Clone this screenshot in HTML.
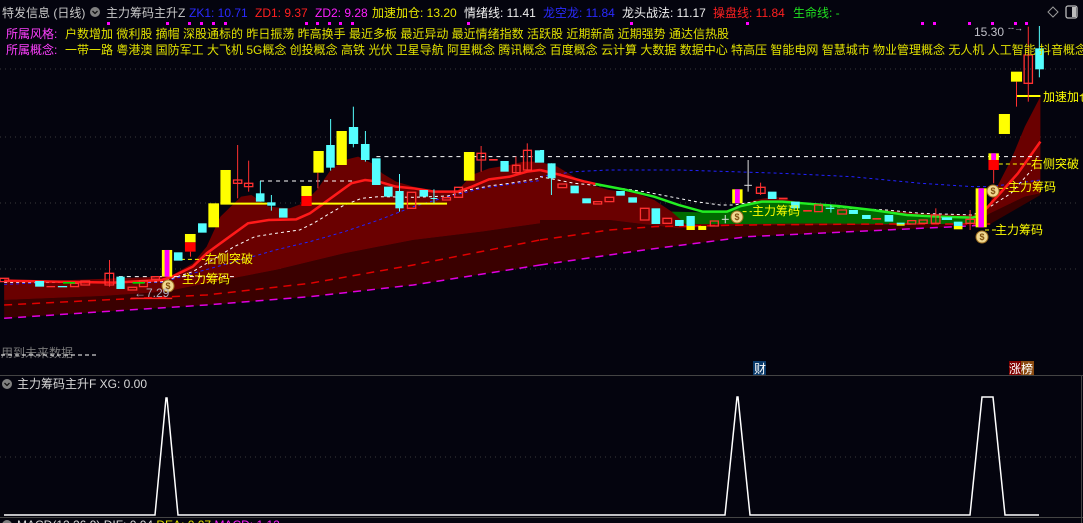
<!DOCTYPE html>
<html><head><meta charset="utf-8"><style>
html,body{margin:0;padding:0;background:#04040e;width:1083px;height:523px;overflow:hidden}
svg{display:block}
text{font-family:"Liberation Sans","Noto Sans CJK SC",sans-serif}
</style></head><body>
<svg width="1083" height="523" viewBox="0 0 1083 523" xmlns="http://www.w3.org/2000/svg">
<rect width="1083" height="523" fill="#04040e"/>
<!-- grid -->
<g stroke="#3a3a3a" stroke-dasharray="1 4" stroke-width="1">
<line x1="0" y1="69" x2="1080" y2="69"/><line x1="0" y1="137" x2="1080" y2="137"/>
<line x1="0" y1="203" x2="1080" y2="203"/><line x1="0" y1="269" x2="1080" y2="269"/>
<line x1="0" y1="457" x2="1080" y2="457"/>
</g>

<!-- LEFT chart group (zoom coords) -->
<g transform="translate(0,90) scale(0.3444,0.3333)">
<polygon fill="#3a0000" points="12,630 300,618 480,605 600,580 800,540 1000,490 1200,450 1400,425 1568,400 1568,525 1200,585 900,620 600,645 300,665 12,685"/>
<polygon fill="#6a0000" points="12,575 160,572 470,560 500,555 560,520 600,470 640,380 700,320 730,315 780,350 840,355 880,340 920,300 960,240 1000,210 1040,200 1080,220 1110,250 1150,275 1200,290 1280,305 1330,300 1370,255 1420,235 1480,225 1520,215 1568,215 1568,400 1400,425 1200,450 1000,490 800,540 600,580 480,605 300,618 12,630"/>
<polyline fill="none" stroke="#e00000" stroke-width="1.5" stroke-dasharray="8 6" vector-effect="non-scaling-stroke" points="12,645 300,630 600,615 900,580 1200,525 1568,450"/>
<polyline fill="none" stroke="#e000e0" stroke-width="1.5" stroke-dasharray="8 6" vector-effect="non-scaling-stroke" points="12,685 300,665 600,645 900,620 1200,585 1568,525"/>
<polyline fill="none" stroke="#2222ff" stroke-width="1" stroke-dasharray="3 3" vector-effect="non-scaling-stroke" points="12,583 200,575 400,578 470,577 560,550 700,510 800,480 900,455 1000,425 1100,390 1200,350 1300,320 1400,295 1500,280 1568,272"/>
<polyline fill="none" stroke="#ffffff" stroke-width="1" stroke-dasharray="3 3" vector-effect="non-scaling-stroke" points="12,577 300,578 470,575 560,545 600,520 680,470 740,440 800,430 870,420 910,400 950,375 1000,345 1050,325 1100,320 1200,322 1300,318 1360,300 1420,288 1480,280 1568,265"/>
<polyline fill="none" stroke="#ff1a1a" stroke-width="2.5" vector-effect="non-scaling-stroke" points="12,572 160,575 330,578 470,570 500,560 560,530 600,490 640,460 680,430 720,400 780,390 860,388 900,370 940,340 980,310 1020,280 1060,270 1100,275 1150,290 1200,295 1260,305 1330,305 1370,290 1420,268 1480,260 1530,245 1568,240"/>
<g stroke="#ffffff" stroke-dasharray="4 4" vector-effect="non-scaling-stroke" stroke-width="1">
<line x1="755" y1="273" x2="1030" y2="273" vector-effect="non-scaling-stroke"/>
<line x1="1093" y1="200" x2="1568" y2="200" vector-effect="non-scaling-stroke"/>
<line x1="345" y1="560" x2="470" y2="560" vector-effect="non-scaling-stroke"/>
<line x1="505" y1="560" x2="690" y2="560" vector-effect="non-scaling-stroke"/>
</g>
<g stroke="#ffff00" stroke-width="2" vector-effect="non-scaling-stroke">
<line x1="640" y1="341" x2="790" y2="341" vector-effect="non-scaling-stroke"/>
<line x1="890" y1="341" x2="1298" y2="341" vector-effect="non-scaling-stroke"/>
</g>
<line x1="505" y1="508" x2="595" y2="508" stroke="#ffff00" stroke-dasharray="4 3" vector-effect="non-scaling-stroke"/>
<line x1="380" y1="625" x2="500" y2="625" stroke="#ff2020" stroke-width="1.5" vector-effect="non-scaling-stroke"/>
<!-- wicks -->
<g stroke-width="1" vector-effect="non-scaling-stroke">
<line x1="690" y1="165" x2="690" y2="325" stroke="#ff3030" vector-effect="non-scaling-stroke"/>
<line x1="722" y1="212" x2="722" y2="305" stroke="#ff3030" vector-effect="non-scaling-stroke"/>
<line x1="756" y1="273" x2="756" y2="335" stroke="#55ffff" vector-effect="non-scaling-stroke"/>
<line x1="788" y1="315" x2="788" y2="362" stroke="#55ffff" vector-effect="non-scaling-stroke"/>
<line x1="923" y1="248" x2="923" y2="295" stroke="#ff3030" vector-effect="non-scaling-stroke"/>
<line x1="960" y1="87" x2="960" y2="242" stroke="#55ffff" vector-effect="non-scaling-stroke"/>
<line x1="1026" y1="50" x2="1026" y2="172" stroke="#55ffff" vector-effect="non-scaling-stroke"/>
<line x1="1061" y1="123" x2="1061" y2="215" stroke="#55ffff" vector-effect="non-scaling-stroke"/>
<line x1="1160" y1="252" x2="1160" y2="365" stroke="#55ffff" vector-effect="non-scaling-stroke"/>
<line x1="1397" y1="168" x2="1397" y2="245" stroke="#ff3030" vector-effect="non-scaling-stroke"/>
<line x1="1531" y1="160" x2="1531" y2="240" stroke="#ff3030" vector-effect="non-scaling-stroke"/>
<line x1="1498" y1="200" x2="1498" y2="250" stroke="#ff3030" vector-effect="non-scaling-stroke"/>
<line x1="318" y1="510" x2="318" y2="590" stroke="#ff3030" vector-effect="non-scaling-stroke"/>
<line x1="1260" y1="298" x2="1260" y2="340" stroke="#55ffff" vector-effect="non-scaling-stroke"/>
<line x1="553" y1="485" x2="553" y2="500" stroke="#ff3030" vector-effect="non-scaling-stroke"/>
</g>
<!-- solid bodies -->
<rect x="640" y="240" width="30" height="100" fill="#ffff00"/>
<rect x="605" y="340" width="31" height="72" fill="#ffff00"/>
<rect x="537" y="432" width="31" height="25" fill="#ffff00"/><rect x="537" y="457" width="31" height="28" fill="#ff0000"/>
<rect x="470" y="480" width="30" height="80" fill="#ffff00"/><rect x="478" y="480" width="14" height="80" fill="#ff00ff"/>
<rect x="875" y="288" width="30" height="30" fill="#ffff00"/><rect x="875" y="318" width="30" height="30" fill="#ff0000"/>
<rect x="910" y="183" width="30" height="65" fill="#ffff00"/>
<rect x="977" y="123" width="30" height="102" fill="#ffff00"/>
<rect x="1347" y="186" width="31" height="86" fill="#ffff00"/>
<g fill="#55ffff">
<rect x="505" y="487" width="25" height="25"/><rect x="575" y="400" width="25" height="28"/>
<rect x="743" y="310" width="25" height="25"/><rect x="776" y="337" width="24" height="10"/>
<rect x="810" y="355" width="25" height="28"/><rect x="947" y="165" width="25" height="68"/>
<rect x="1013" y="111" width="27" height="51"/><rect x="1048" y="162" width="25" height="48"/>
<rect x="1080" y="205" width="25" height="80"/><rect x="1115" y="290" width="25" height="30"/>
<rect x="1148" y="303" width="24" height="52"/><rect x="1218" y="300" width="25" height="20"/>
<rect x="1453" y="213" width="24" height="32"/><rect x="1553" y="181" width="15" height="37"/>
<rect x="338" y="560" width="24" height="37"/><rect x="102" y="573" width="26" height="17"/>
<rect x="168" y="588" width="27" height="4"/>
</g>
<g fill="none" stroke="#ff3030" stroke-width="1.3" vector-effect="non-scaling-stroke">
<rect x="678" y="270" width="24" height="10" vector-effect="non-scaling-stroke"/>
<rect x="710" y="280" width="24" height="10" vector-effect="non-scaling-stroke"/>
<rect x="1183" y="307" width="24" height="48" vector-effect="non-scaling-stroke"/>
<rect x="1285" y="323" width="23" height="7" vector-effect="non-scaling-stroke"/>
<rect x="1320" y="292" width="23" height="30" vector-effect="non-scaling-stroke"/>
<rect x="1385" y="190" width="25" height="20" vector-effect="non-scaling-stroke"/>
<rect x="1488" y="226" width="22" height="22" vector-effect="non-scaling-stroke"/>
<rect x="1520" y="181" width="23" height="59" vector-effect="non-scaling-stroke"/>
<rect x="305" y="550" width="25" height="35" vector-effect="non-scaling-stroke"/>
<rect x="0" y="565" width="25" height="10" vector-effect="non-scaling-stroke"/>
<rect x="205" y="580" width="23" height="10" vector-effect="non-scaling-stroke"/>
<rect x="235" y="573" width="25" height="12" vector-effect="non-scaling-stroke"/>
<rect x="372" y="592" width="25" height="8" vector-effect="non-scaling-stroke"/>
<rect x="405" y="572" width="23" height="18" vector-effect="non-scaling-stroke"/>
<rect x="440" y="560" width="23" height="8" vector-effect="non-scaling-stroke"/>
</g>
<rect x="1420" y="207" width="25" height="5" fill="#ff3030"/>
<rect x="135" y="588" width="25" height="4" fill="#ff3030"/>
<rect x="183" y="576" width="35" height="5" fill="#00e000"/><rect x="385" y="576" width="35" height="5" fill="#00e000"/>
<rect x="1250" y="324" width="20" height="3" fill="#55ffff"/>
</g>

<!-- RIGHT chart group -->
<g transform="translate(540,20) scale(0.3463,0.3333)">
<polygon fill="#3a0000" points="0,600 100,600 200,600 400,625 600,615 800,615 1000,615 1200,612 1270,600 1300,580 1400,530 1445,520 1445,525 1300,612 1200,620 900,635 600,650 300,690 0,735"/>
<polygon fill="#6a0000" points="0,426 50,440 130,490 200,510 280,520 330,540 380,575 420,585 500,580 560,565 620,540 680,530 740,545 800,555 900,565 1000,570 1100,580 1250,585 1290,570 1320,500 1360,420 1400,320 1445,230 1445,520 1400,530 1300,580 1270,600 1200,612 1000,615 800,615 600,615 400,625 200,600 100,600 0,600"/>
<polygon fill="#006a00" points="380,575 470,577 540,577 580,560 640,548 700,548 760,552 860,560 960,572 1060,587 1150,592 1250,595 1260,612 1150,612 1000,612 800,610 600,612 420,612"/>
<polyline fill="none" stroke="#e00000" stroke-width="1.5" stroke-dasharray="8 6" vector-effect="non-scaling-stroke" points="0,660 200,630 330,620 600,615 1000,612 1300,612"/>
<polyline fill="none" stroke="#e000e0" stroke-width="1.5" stroke-dasharray="8 6" vector-effect="non-scaling-stroke" points="0,735 300,690 600,650 900,635 1200,620 1290,615"/>
<polyline fill="none" stroke="#2222ff" stroke-width="1" stroke-dasharray="3 3" vector-effect="non-scaling-stroke" points="0,470 100,455 200,450 400,450 550,455 700,460 900,470 1100,490 1250,500 1300,500 1445,480"/>
<polyline fill="none" stroke="#ffffff" stroke-width="1" stroke-dasharray="3 3" vector-effect="non-scaling-stroke" points="0,470 100,490 200,500 300,515 350,525 450,545 520,555 560,555 620,545 700,545 800,555 900,565 1000,570 1100,580 1250,585 1300,560 1360,520 1420,450"/>
<polyline fill="none" stroke="#ff1a1a" stroke-width="2.5" vector-effect="non-scaling-stroke" points="0,450 60,465 130,485 160,492"/>
<polyline fill="none" stroke="#22ee22" stroke-width="2.5" vector-effect="non-scaling-stroke" points="160,492 250,510 330,530 400,555 470,575 540,575 580,558 640,545 700,545 760,550 860,558 960,570 1060,585 1150,590 1250,593 1270,585"/>
<polyline fill="none" stroke="#ff1a1a" stroke-width="2.5" vector-effect="non-scaling-stroke" points="1270,585 1285,570 1320,530 1380,460 1445,365"/>
<line x1="0" y1="410" x2="1440" y2="410" stroke="#fff" stroke-dasharray="4 4" vector-effect="non-scaling-stroke"/>
<line x1="1375" y1="228" x2="1445" y2="228" stroke="#ffff00" stroke-width="2" vector-effect="non-scaling-stroke"/>
<line x1="1325" y1="432" x2="1418" y2="432" stroke="#ffff00" stroke-dasharray="4 3" vector-effect="non-scaling-stroke"/>
<line x1="1285" y1="630" x2="1318" y2="630" stroke="#ffff00" stroke-dasharray="4 3" vector-effect="non-scaling-stroke"/>
<line x1="585" y1="575" x2="612" y2="575" stroke="#ffff00" stroke-dasharray="4 3" vector-effect="non-scaling-stroke"/>
<line x1="1325" y1="505" x2="1352" y2="505" stroke="#ffff00" stroke-dasharray="4 3" vector-effect="non-scaling-stroke"/>
<g stroke-width="1">
<line x1="33" y1="430" x2="33" y2="525" stroke="#55ffff" vector-effect="non-scaling-stroke"/>
<line x1="601" y1="420" x2="601" y2="515" stroke="#dddddd" vector-effect="non-scaling-stroke"/>
<line x1="1410" y1="20" x2="1410" y2="245" stroke="#ff3030" vector-effect="non-scaling-stroke"/>
<line x1="1442" y1="18" x2="1442" y2="172" stroke="#55ffff" vector-effect="non-scaling-stroke"/>
<line x1="1376" y1="185" x2="1376" y2="260" stroke="#ff3030" vector-effect="non-scaling-stroke"/>
<line x1="1310" y1="450" x2="1310" y2="490" stroke="#ff3030" vector-effect="non-scaling-stroke"/>
<line x1="1143" y1="565" x2="1143" y2="610" stroke="#ff3030" vector-effect="non-scaling-stroke"/>
<line x1="1242" y1="570" x2="1242" y2="630" stroke="#ff3030" vector-effect="non-scaling-stroke"/>
<line x1="637" y1="488" x2="637" y2="525" stroke="#ff3030" vector-effect="non-scaling-stroke"/>
<line x1="535" y1="585" x2="535" y2="610" stroke="#dddddd" vector-effect="non-scaling-stroke"/>
<line x1="840" y1="555" x2="840" y2="578" stroke="#55ffff" vector-effect="non-scaling-stroke"/>
</g>
<line x1="590" y1="496" x2="612" y2="496" stroke="#ddd" vector-effect="non-scaling-stroke"/>
<line x1="525" y1="598" x2="545" y2="598" stroke="#ddd" vector-effect="non-scaling-stroke"/>
<g fill="#55ffff">
<rect x="0" y="390" width="12" height="38"/><rect x="22" y="430" width="23" height="45"/>
<rect x="88" y="497" width="24" height="23"/><rect x="122" y="535" width="25" height="15"/>
<rect x="220" y="513" width="25" height="14"/><rect x="255" y="532" width="25" height="16"/>
<rect x="322" y="565" width="25" height="47"/><rect x="390" y="600" width="25" height="18"/>
<rect x="423" y="588" width="24" height="30"/><rect x="658" y="515" width="25" height="22"/>
<rect x="725" y="545" width="25" height="20"/><rect x="892" y="570" width="26" height="12"/>
<rect x="930" y="585" width="25" height="12"/><rect x="995" y="585" width="25" height="20"/>
<rect x="1030" y="608" width="23" height="5"/><rect x="1160" y="592" width="30" height="8"/>
<rect x="1195" y="605" width="25" height="13"/><rect x="1430" y="85" width="25" height="63"/>
<rect x="825" y="563" width="25" height="4"/>
</g>
<g fill="#ffff00">
<rect x="423" y="618" width="24" height="12"/><rect x="457" y="618" width="23" height="12"/>
<rect x="1195" y="618" width="25" height="10"/><rect x="1030" y="613" width="23" height="4"/>
<rect x="1360" y="155" width="32" height="30"/><rect x="1325" y="282" width="32" height="60"/>
<rect x="555" y="508" width="30" height="42"/><rect x="1258" y="505" width="32" height="117"/>
<rect x="1295" y="400" width="30" height="20"/>
</g>
<rect x="563" y="508" width="14" height="42" fill="#ff00ff"/>
<rect x="1266" y="505" width="16" height="117" fill="#ff00ff"/>
<rect x="1303" y="400" width="14" height="20" fill="#ff00ff"/>
<rect x="1295" y="420" width="30" height="30" fill="#ff0000"/>
<g fill="#ff3030">
<rect x="690" y="533" width="25" height="5"/><rect x="760" y="570" width="25" height="5"/>
<rect x="960" y="594" width="25" height="5"/>
</g>
<g fill="none" stroke="#ff3030" stroke-width="1.3">
<rect x="52" y="492" width="25" height="11" vector-effect="non-scaling-stroke"/>
<rect x="155" y="545" width="23" height="7" vector-effect="non-scaling-stroke"/>
<rect x="188" y="532" width="25" height="13" vector-effect="non-scaling-stroke"/>
<rect x="290" y="565" width="25" height="35" vector-effect="non-scaling-stroke"/>
<rect x="355" y="595" width="25" height="15" vector-effect="non-scaling-stroke"/>
<rect x="492" y="603" width="23" height="15" vector-effect="non-scaling-stroke"/>
<rect x="625" y="502" width="25" height="18" vector-effect="non-scaling-stroke"/>
<rect x="793" y="555" width="22" height="20" vector-effect="non-scaling-stroke"/>
<rect x="860" y="570" width="25" height="12" vector-effect="non-scaling-stroke"/>
<rect x="1062" y="602" width="23" height="10" vector-effect="non-scaling-stroke"/>
<rect x="1095" y="600" width="23" height="10" vector-effect="non-scaling-stroke"/>
<rect x="1130" y="585" width="25" height="25" vector-effect="non-scaling-stroke"/>
<rect x="1230" y="598" width="25" height="12" vector-effect="non-scaling-stroke"/>
<rect x="1398" y="105" width="24" height="85" vector-effect="non-scaling-stroke"/>
</g>
</g>

<!-- money bags -->
<g font-size="9" font-weight="bold" text-anchor="middle">
<circle cx="168" cy="286" r="6" fill="#f0d890" stroke="#a07020"/><text x="168" y="289" fill="#805010">$</text>
<circle cx="737" cy="217" r="6" fill="#f0d890" stroke="#a07020"/><text x="737" y="220" fill="#805010">$</text>
<circle cx="993" cy="191" r="6" fill="#f0d890" stroke="#a07020"/><text x="993" y="194" fill="#805010">$</text>
<circle cx="982" cy="237" r="6" fill="#f0d890" stroke="#a07020"/><text x="982" y="240" fill="#805010">$</text>
</g>
<g fill="#ffff00" font-size="12">
<text x="205" y="263">右侧突破</text>
<text x="182" y="283">主力筹码</text>
<text x="752" y="215">主力筹码</text>
<text x="1008" y="191">主力筹码</text>
<text x="1031" y="168">右侧突破</text>
<text x="995" y="234">主力筹码</text>
<text x="1043" y="101">加速加仓</text>
</g>
<text x="134" y="297" fill="#b0b0c0" font-size="12">←7.29</text>
<text x="974" y="36" fill="#c0c0c8" font-size="12">15.30</text>
<text x="1008" y="31" fill="#c0c0c8" font-size="9">--→</text>

<!-- pink dots -->
<g fill="#ff00ff">
<rect x="107" y="22" width="3" height="3"/><rect x="166" y="22" width="3" height="3"/><rect x="188" y="22" width="3" height="3"/><rect x="200" y="22" width="3" height="3"/><rect x="212" y="22" width="3" height="3"/><rect x="224" y="22" width="3" height="3"/><rect x="305" y="22" width="3" height="3"/><rect x="316" y="22" width="3" height="3"/><rect x="328" y="22" width="3" height="3"/><rect x="339" y="22" width="3" height="3"/><rect x="351" y="22" width="3" height="3"/><rect x="467" y="22" width="3" height="3"/><rect x="630" y="22" width="3" height="3"/><rect x="746" y="22" width="3" height="3"/><rect x="921" y="22" width="3" height="3"/><rect x="933" y="22" width="3" height="3"/><rect x="968" y="22" width="3" height="3"/><rect x="991" y="22" width="3" height="3"/><rect x="1014" y="22" width="3" height="3"/><rect x="1025" y="22" width="3" height="3"/>
</g>

<!-- header -->
<g font-size="12">
<text x="2" y="17" fill="#c8c8c8">特发信息 (日线)</text>
<circle cx="95" cy="12" r="5" fill="#808080"/><path d="M92.5 11 L95 13.5 L97.5 11" stroke="#111" fill="none" stroke-width="1.3"/>
<text x="106" y="17" fill="#c8c8c8">主力筹码主升Z</text>
<text x="189" y="17" fill="#2a2aff">ZK1: 10.71</text>
<text x="255" y="17" fill="#ff2020">ZD1: 9.37</text>
<text x="315" y="17" fill="#ff20ff">ZD2: 9.28</text>
<text x="372" y="17" fill="#e8e800">加速加仓: 13.20</text>
<text x="464" y="17" fill="#f0f0f0">情绪线: 11.41</text>
<text x="543" y="17" fill="#2a2aff">龙空龙: 11.84</text>
<text x="622" y="17" fill="#f0f0f0">龙头战法: 11.17</text>
<text x="713" y="17" fill="#ff2020">操盘线: 11.84</text>
<text x="793" y="17" fill="#20e020">生命线: -</text>
<text x="6" y="38" fill="#ff40ff">所属风格:</text>
<text x="65" y="38" fill="#e0e000">户数增加 微利股 摘帽 深股通标的 昨日振荡 昨高换手 最近多板 最近异动 最近情绪指数 活跃股 近期新高 近期强势 通达信热股</text>
<text x="6" y="54" fill="#ff40ff">所属概念:</text>
<text x="65" y="54" fill="#e0e000">一带一路 粤港澳 国防军工 大飞机 5G概念 创投概念 高铁 光伏 卫星导航 阿里概念 腾讯概念 百度概念 云计算 大数据 数据中心 特高压 智能电网 智慧城市 物业管理概念 无人机 人工智能 抖音概念</text>
</g>
<path d="M1053 7 L1058 12 L1053 17 L1048 12 Z" fill="none" stroke="#999"/>
<rect x="1066" y="6" width="11" height="12" rx="2" fill="none" stroke="#bbb" stroke-width="1.3"/><rect x="1072" y="7" width="4" height="10" fill="#bbb"/>

<!-- footer of main -->
<text x="1" y="357" fill="#7a7a7a" font-size="12">用到未来数据</text>
<line x1="1" y1="355" x2="97" y2="355" stroke="#fff" stroke-dasharray="4 3"/>
<rect x="753" y="361" width="13" height="14" fill="#0a3a6a"/><text x="754" y="373" fill="#fff" font-size="12">财</text>
<rect x="1009" y="361" width="12" height="14" fill="#800000"/><rect x="1021" y="361" width="13" height="14" fill="#8a4a10"/><text x="1009" y="373" fill="#fff" font-size="12">涨榜</text>
<line x1="0" y1="375.5" x2="1083" y2="375.5" stroke="#444"/>

<!-- bottom panel -->
<circle cx="7" cy="384" r="5" fill="#808080"/><path d="M4.5 383 L7 385.5 L9.5 383" stroke="#111" fill="none" stroke-width="1.3"/>
<text x="17" y="388" fill="#d8d8d8" font-size="12">主力筹码主升F XG: 0.00</text>
<polyline fill="none" stroke="#fff" stroke-width="1.5" points="4,515 155,515 166,398 167,398 178,515 725,515 737,397 738,397 750,515 970,515 982,397 993,397 1005,515 1039,515"/>
<line x1="1081.5" y1="376" x2="1081.5" y2="523" stroke="#444"/>
<line x1="0" y1="517.5" x2="1083" y2="517.5" stroke="#444"/>
<circle cx="7" cy="525" r="5" fill="#808080"/>
<text x="17" y="529" font-size="12" fill="#d8d8d8">MACD(12,26,9) DIF: 0.04 <tspan fill="#e0e000">DEA: 0.07</tspan> <tspan fill="#ff20ff">MACD: 1.12</tspan></text>
</svg>
</body></html>
